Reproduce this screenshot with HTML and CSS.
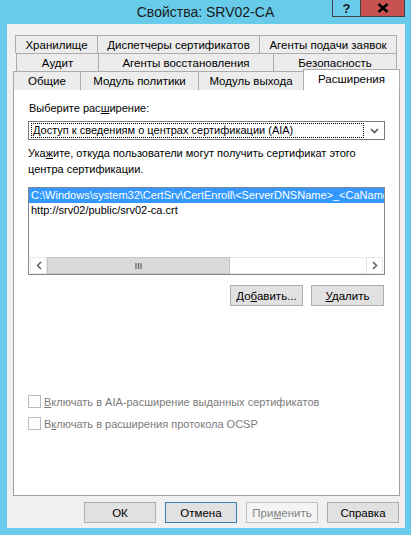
FILE: index.html
```html
<!DOCTYPE html>
<html lang="ru">
<head>
  <meta charset="UTF-8" />
  <title>Свойства: SRV02-CA</title>
  <link rel="stylesheet" href="styles.css">
</head>
<body>
  <div class="window">
    <div class="titlebar">
      <span class="title">Свойства: SRV02-CA</span>
      <div class="caption-btns">
        <span class="cap-btn help">?</span>
        <span class="cap-btn close">
          <svg width="12" height="10" viewBox="0 0 12 10"><path d="M1.5 1 L10.5 9 M10.5 1 L1.5 9" stroke="#000" stroke-width="2.4" fill="none"/></svg>
        </span>
      </div>
    </div>

    <div class="client">
      <div class="tabs">
        <div class="tab-row row1">
          <div class="tab">Хранилище</div>
          <div class="tab">Диспетчеры сертификатов</div>
          <div class="tab">Агенты подачи заявок</div>
        </div>
        <div class="tab-row row2">
          <div class="tab">Аудит</div>
          <div class="tab">Агенты восстановления</div>
          <div class="tab">Безопасность</div>
        </div>
        <div class="tab-row row3">
          <div class="tab">Общие</div>
          <div class="tab">Модуль политики</div>
          <div class="tab">Модуль выхода</div>
          <div class="tab selected">Расширения</div>
        </div>
      </div>

      <div class="panel">
        <div class="label">Выберите рас<u>ш</u>ирение:</div>
        <div class="combo">
          <span class="combo-text">Доступ к сведениям о центрах сертификации (AIA)</span>
          <span class="combo-arrow">
            <svg width="9" height="6" viewBox="0 0 9 6"><path d="M1 1 L4.5 4.5 L8 1" stroke="#555" stroke-width="1.6" fill="none"/></svg>
          </span>
        </div>

        <div class="hint">Ука<u>ж</u>ите, откуда пользователи могут получить сертификат этого центра сертификации.</div>

        <div class="listbox">
          <div class="list-items">
            <div class="list-item active">C:\Windows\system32\CertSrv\CertEnroll\&lt;ServerDNSName&gt;_&lt;CaName&gt;&lt;CertificateName&gt;.crt</div>
            <div class="list-item">http://srv02/public/srv02-ca.crt</div>
          </div>
          <div class="hscroll">
            <span class="sb-arrow">
              <svg width="6" height="9" viewBox="0 0 6 9"><path d="M5 1 L1.5 4.5 L5 8" stroke="#606060" stroke-width="1.5" fill="none"/></svg>
            </span>
            <span class="sb-thumb">
              <svg width="7" height="6" viewBox="0 0 7 6"><path d="M1 0 V6 M3.5 0 V6 M6 0 V6" stroke="#606060" stroke-width="1.2"/></svg>
            </span>
            <span class="sb-track"></span>
            <span class="sb-arrow">
              <svg width="6" height="9" viewBox="0 0 6 9"><path d="M1 1 L4.5 4.5 L1 8" stroke="#606060" stroke-width="1.5" fill="none"/></svg>
            </span>
          </div>
        </div>

        <div class="list-buttons">
          <button class="btn">До<u>б</u>авить...</button>
          <button class="btn"><u>У</u>далить</button>
        </div>

        <div class="checks">
          <label class="check"><span class="box"></span><span><u>В</u>ключать в AIA-расширение выданных сертификатов</span></label>
          <label class="check"><span class="box"></span><span>В<u>к</u>лючать в расширения протокола OCSP</span></label>
        </div>
      </div>

      <div class="dialog-buttons">
        <button class="btn">ОК</button>
        <button class="btn default">Отмена</button>
        <button class="btn disabled">При<u>м</u>енить</button>
        <button class="btn">Справка</button>
      </div>
    </div>
  </div>
</body>
</html>
```

FILE: styles.css
```css
body {
  margin: 0;
  background: #68cbea;
  font-family: "Liberation Sans", Arial, sans-serif;
  font-size: 11px;
  color: #000;
}
u { text-decoration: underline; text-underline-offset: 1px; }

.window {
  width: 411px;
  height: 535px;
  position: relative;
  display: flex;
  flex-direction: column;
}

/* title bar */
.titlebar {
  height: 24px;
  display: flex;
  align-items: center;
  justify-content: center;
  font-size: 14px;
  color: #1a1a1a;
}
.caption-btns {
  position: absolute;
  top: 0;
  right: 6px;
  display: flex;
}
.cap-btn {
  height: 16px;
  display: flex;
  align-items: center;
  justify-content: center;
  border: 1px solid #404040;
  border-top: none;
}
.help {
  width: 27px;
  font-weight: 700;
  font-size: 13px;
  border-right: none;
}
.close {
  width: 43px;
  background: #c75050;
}

/* client area */
.client {
  height: 504px;
  margin: 0 6px 0 7px;
  background: #f0f0f0;
  padding: 11px 5px 0 6px;
  box-sizing: border-box;
}

.tab-row {
  display: grid;
  height: 18px;
}
.row1 { grid-template-columns: 83px 162px 137px; margin-left: 2px; }
.row2 { grid-template-columns: 83px 175px 123px; margin-left: 3px; }
.row3 { grid-template-columns: 68px 118px 105px 96px; }

.tab {
  border: 1px solid #acacac;
  border-bottom: none;
  background: #ececec;
  display: flex;
  align-items: center;
  justify-content: center;
  white-space: nowrap;
  font-size: 11.5px;
}
.tab + .tab { margin-left: -1px; }
.tab.selected {
  background: #fff;
  height: 21px;
  margin-top: -2px;
  position: relative;
  z-index: 1;
  align-items: flex-start;
  padding-top: 3px;
  box-sizing: border-box;
}

.panel {
  height: 407px;
  box-sizing: border-box;
  border: 1px solid #a0a0a0;
  background: #fff;
  padding: 11px 14px 0 14px;
}
.label { line-height: 15px; padding-left: 1px; }

.combo {
  margin-top: 5px;
  height: 19px;
  box-sizing: border-box;
  border: 1px solid #7a7a7a;
  display: flex;
  padding: 1px 0 1px 2px;
}
.combo-text {
  flex: 1;
  border: 1px dotted #000;
  line-height: 13px;
  padding-left: 1px;
}
.combo-arrow {
  width: 20px;
  display: flex;
  align-items: center;
  justify-content: center;
}

.hint {
  margin-top: 5px;
  line-height: 16px;
}

.listbox {
  margin-top: 10px;
  height: 88px;
  box-sizing: border-box;
  border: 1px solid #828790;
  display: flex;
  flex-direction: column;
}
.list-items { flex: 1; overflow: hidden; }
.list-item {
  line-height: 15px;
  padding-left: 2px;
  white-space: nowrap;
}
.list-item.active {
  background: #3399ff;
  color: #fff;
}
.hscroll {
  height: 17px;
  display: flex;
  margin: 0 1px 0 1px;
}
.sb-arrow {
  width: 17px;
  box-sizing: border-box;
  border: 1px solid #e6e6e6;
  display: flex;
  align-items: center;
  justify-content: center;
  background: #fff;
}
.sb-thumb {
  width: 183px;
  background: #dadada;
  border: 1px solid #c5c5c5;
  box-sizing: border-box;
  display: flex;
  align-items: center;
  justify-content: center;
}
.sb-track { flex: 1; background: #fff; border-top: 1px solid #e6e6e6; border-bottom: 1px solid #e6e6e6; }

.btn {
  width: 72px;
  height: 21px;
  padding: 0;
  font: inherit;
  font-size: 11.5px;
  color: #000;
  background: #e1e1e1;
  border: 1px solid #adadad;
}
.btn.default { border-color: #3c7fb1; }
.btn.disabled {
  background: #f4f4f4;
  border-color: #bfbfbf;
  color: #838383;
}

.list-buttons {
  margin-top: 10px;
  display: flex;
  justify-content: flex-end;
  gap: 8px;
  padding-right: 1px;
}
.list-buttons .btn { width: 73px; }

.checks {
  margin-top: 89px;
  display: flex;
  flex-direction: column;
  gap: 9px;
}
.check {
  display: flex;
  align-items: center;
  gap: 3px;
  color: #7b7b7b;
  height: 13px;
}
.box {
  width: 13px;
  height: 13px;
  box-sizing: border-box;
  border: 1px solid #bcbcbc;
  background: #fff;
}

.dialog-buttons {
  margin-top: 6px;
  display: flex;
  justify-content: flex-end;
  gap: 9px;
  padding-right: 1px;
}
```
